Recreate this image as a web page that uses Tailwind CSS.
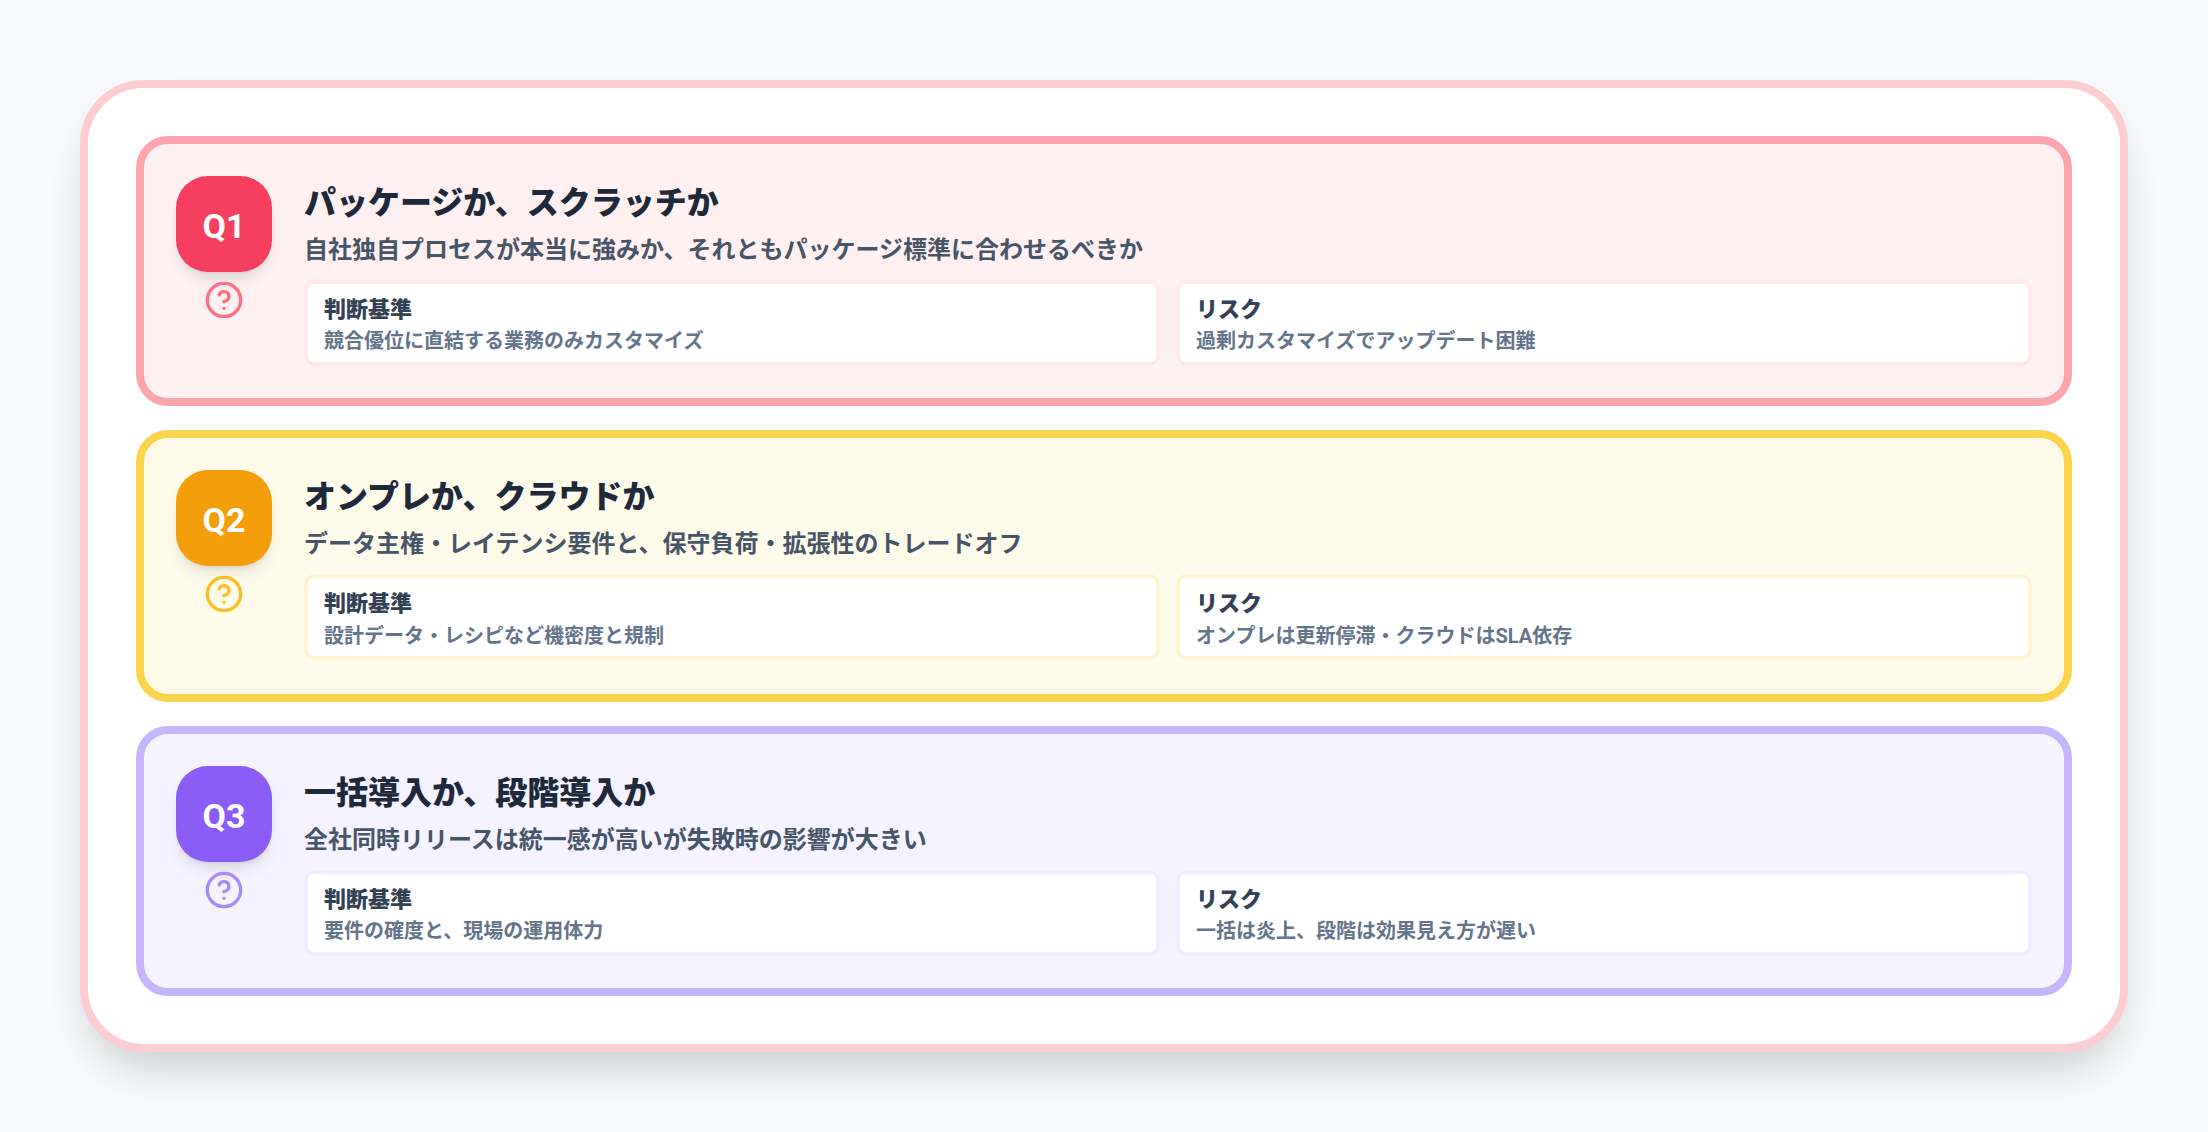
<!DOCTYPE html>
<html lang="ja">
<head>
<meta charset="UTF-8" />
<title>Questions</title>
<script src="https://cdn.jsdelivr.net/npm/@tailwindcss/browser@4"></script>
</head>
<body class="bg-[#f8fafc] font-['Roboto','Noto_Sans_CJK_JP',sans-serif]">
<div class="w-[2208px] h-[1132px] p-20">
  <div class="h-full flex flex-col gap-6 bg-white border-8 border-[#fecdd3] rounded-[64px] p-12 shadow-[0_25px_50px_-12px_rgba(0,0,0,0.2)]">

    <!-- Q1 -->
    <section class="h-[270px] flex gap-8 p-8 bg-[#fff1f2] border-8 border-[#fda4af] rounded-[32px]">
      <div class="flex flex-col items-center gap-2 shrink-0">
        <div class="w-24 h-24 pt-[5px] flex items-center justify-center rounded-[32px] bg-[#f43f5e] text-white text-[34px] font-bold shadow-lg">Q1</div>
        <svg class="w-10 h-10 text-[#fb7185]" viewBox="0 0 24 24" fill="none" stroke="currentColor" stroke-width="2" stroke-linecap="round" stroke-linejoin="round"><circle cx="12" cy="12" r="10"/><path d="M9.09 9a3 3 0 0 1 5.83 1c0 2-3 3-3 3"/><path d="M12 17h.01"/></svg>
      </div>
      <div class="flex-1 flex flex-col">
        <h2 class="text-[32px] leading-[54px] font-black text-[#1e293b]">パッケージか、スクラッチか</h2>
        <p class="mt-0.5 text-2xl leading-9 font-bold text-[#475569]">自社独自プロセスが本当に強みか、それともパッケージ標準に合わせるべきか</p>
        <div class="flex-1 mt-3 grid grid-cols-2 gap-4">
          <div class="px-4 pt-2.5 bg-white border-4 border-[#ffe8ea] rounded-[10px]">
            <h3 class="text-[22px] leading-8 font-black text-[#334155]">判断基準</h3>
            <p class="text-xl leading-[30px] font-bold text-[#64748b]">競合優位に直結する業務のみカスタマイズ</p>
          </div>
          <div class="px-4 pt-2.5 bg-white border-4 border-[#ffe8ea] rounded-[10px]">
            <h3 class="text-[22px] leading-8 font-black text-[#334155]">リスク</h3>
            <p class="text-xl leading-[30px] font-bold text-[#64748b]">過剰カスタマイズでアップデート困難</p>
          </div>
        </div>
      </div>
    </section>

    <!-- Q2 -->
    <section class="h-[272px] flex gap-8 p-8 bg-[#fffbeb] border-8 border-[#fcd34d] rounded-[32px]">
      <div class="flex flex-col items-center gap-2 shrink-0">
        <div class="w-24 h-24 pt-[5px] flex items-center justify-center rounded-[32px] bg-[#f59e0b] text-white text-[34px] font-bold shadow-lg">Q2</div>
        <svg class="w-10 h-10 text-[#fbbf24]" viewBox="0 0 24 24" fill="none" stroke="currentColor" stroke-width="2" stroke-linecap="round" stroke-linejoin="round"><circle cx="12" cy="12" r="10"/><path d="M9.09 9a3 3 0 0 1 5.83 1c0 2-3 3-3 3"/><path d="M12 17h.01"/></svg>
      </div>
      <div class="flex-1 flex flex-col">
        <h2 class="text-[32px] leading-[54px] font-black text-[#1e293b]">オンプレか、クラウドか</h2>
        <p class="mt-0.5 text-2xl leading-9 font-bold text-[#475569]">データ主権・レイテンシ要件と、保守負荷・拡張性のトレードオフ</p>
        <div class="mt-3 h-[86px] grid grid-cols-2 gap-4">
          <div class="px-4 pt-2.5 bg-white border-4 border-[#fef5d0] rounded-[10px]">
            <h3 class="text-[22px] leading-8 font-black text-[#334155]">判断基準</h3>
            <p class="text-xl leading-8 font-bold text-[#64748b]">設計データ・レシピなど機密度と規制</p>
          </div>
          <div class="px-4 pt-2.5 bg-white border-4 border-[#fef5d0] rounded-[10px]">
            <h3 class="text-[22px] leading-8 font-black text-[#334155]">リスク</h3>
            <p class="text-xl leading-8 font-bold text-[#64748b]">オンプレは更新停滞・クラウドはSLA依存</p>
          </div>
        </div>
      </div>
    </section>

    <!-- Q3 -->
    <section class="h-[270px] flex gap-8 p-8 bg-[#f5f3ff] border-8 border-[#c4b5fd] rounded-[32px]">
      <div class="flex flex-col items-center gap-2 shrink-0">
        <div class="w-24 h-24 pt-[5px] flex items-center justify-center rounded-[32px] bg-[#8b5cf6] text-white text-[34px] font-bold shadow-lg">Q3</div>
        <svg class="w-10 h-10 text-[#a78bfa]" viewBox="0 0 24 24" fill="none" stroke="currentColor" stroke-width="2" stroke-linecap="round" stroke-linejoin="round"><circle cx="12" cy="12" r="10"/><path d="M9.09 9a3 3 0 0 1 5.83 1c0 2-3 3-3 3"/><path d="M12 17h.01"/></svg>
      </div>
      <div class="flex-1 flex flex-col">
        <h2 class="text-[32px] leading-[54px] font-black text-[#1e293b]">一括導入か、段階導入か</h2>
        <p class="mt-0.5 text-2xl leading-9 font-bold text-[#475569]">全社同時リリースは統一感が高いが失敗時の影響が大きい</p>
        <div class="flex-1 mt-3 grid grid-cols-2 gap-4">
          <div class="px-4 pt-2.5 bg-white border-4 border-[#f0ecfe] rounded-[10px]">
            <h3 class="text-[22px] leading-8 font-black text-[#334155]">判断基準</h3>
            <p class="text-xl leading-[30px] font-bold text-[#64748b]">要件の確度と、現場の運用体力</p>
          </div>
          <div class="px-4 pt-2.5 bg-white border-4 border-[#f0ecfe] rounded-[10px]">
            <h3 class="text-[22px] leading-8 font-black text-[#334155]">リスク</h3>
            <p class="text-xl leading-[30px] font-bold text-[#64748b]">一括は炎上、段階は効果見え方が遅い</p>
          </div>
        </div>
      </div>
    </section>

  </div>
</div>
</body>
</html>
